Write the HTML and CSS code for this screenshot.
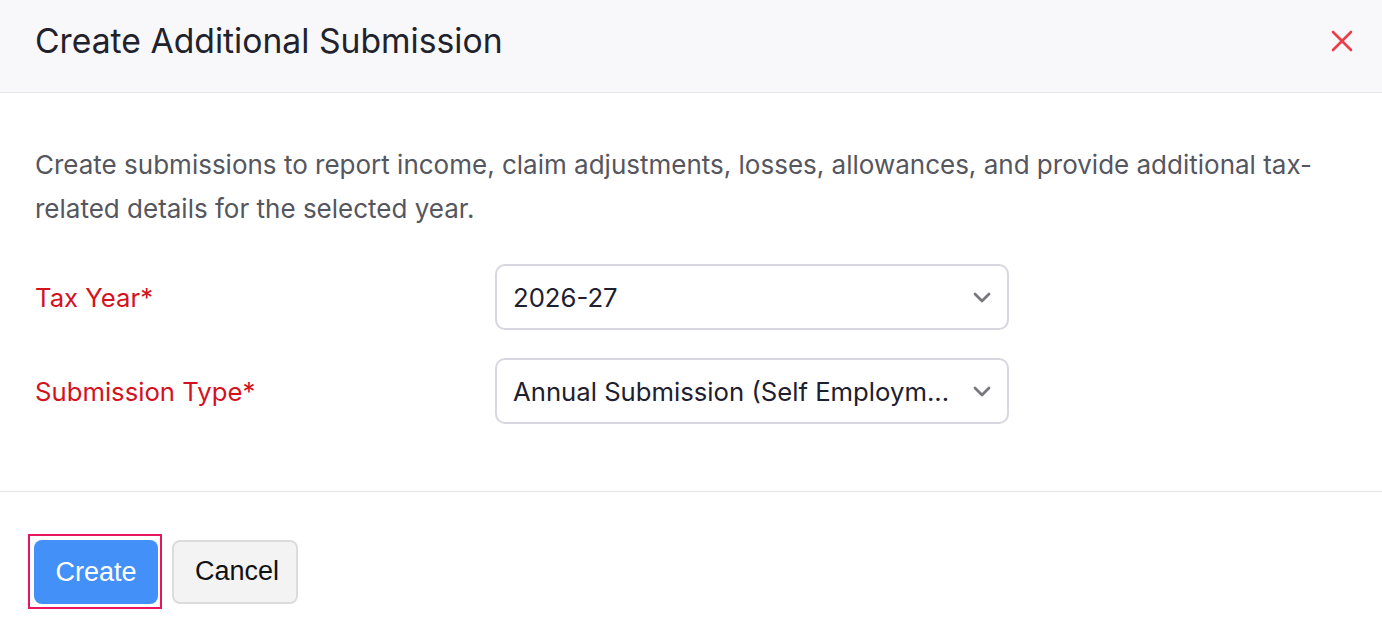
FILE: index.html
```html
<!DOCTYPE html>
<html lang="en">
<head>
  <meta charset="UTF-8" />
  <meta name="viewport" content="width=device-width, initial-scale=1" />
  <title>Create Additional Submission</title>
  <link rel="stylesheet" href="styles.css">
</head>
<body>
  <div class="modal">
    <div class="modal-header">
      <h2 class="modal-title">Create Additional Submission</h2>
      <button class="close-btn" aria-label="Close">
        <svg width="24" height="24" viewBox="0 0 24 24" fill="none" stroke="#ec3d49" stroke-width="2.6" stroke-linecap="round">
          <line x1="3" y1="3" x2="21" y2="21" />
          <line x1="21" y1="3" x2="3" y2="21" />
        </svg>
      </button>
    </div>

    <div class="modal-body">
      <p class="intro">Create submissions to report income, claim adjustments, losses, allowances, and provide additional tax-related details for the selected year.</p>

      <div class="form-row">
        <label class="form-label">Tax Year*</label>
        <div class="select-box">
          <span class="select-value">2026-27</span>
          <svg class="chevron" width="18" height="11" viewBox="0 0 18 11" fill="none" stroke="#77777d" stroke-width="2.8" stroke-linecap="round" stroke-linejoin="round">
            <polyline points="2,2 9,9 16,2" />
          </svg>
        </div>
      </div>

      <div class="form-row">
        <label class="form-label">Submission Type*</label>
        <div class="select-box">
          <span class="select-value" title="Annual Submission (Self Employment)">Annual Submission (Self Employm...</span>
          <svg class="chevron" width="18" height="11" viewBox="0 0 18 11" fill="none" stroke="#77777d" stroke-width="2.8" stroke-linecap="round" stroke-linejoin="round">
            <polyline points="2,2 9,9 16,2" />
          </svg>
        </div>
      </div>
    </div>

    <div class="modal-footer">
      <span class="focus-ring">
        <button class="btn btn-primary">Create</button>
      </span>
      <button class="btn btn-secondary">Cancel</button>
    </div>
  </div>
</body>
</html>
```

FILE: styles.css
```css
body {
  margin: 0;
  padding: 0;
  background: #fff;
  font-family: Inter, "Noto Sans", sans-serif;
}
.modal {
  width: 1382px;
  min-height: 632px;
  background: #fff;
}
.modal-header {
  box-sizing: border-box;
  display: flex;
  align-items: center;
  justify-content: space-between;
  height: 93px;
  padding: 0 28px 11px 35px;
  background: #f8f8fa;
  border-bottom: 1px solid #e6e6ea;
}
.modal-title {
  margin: 0;
  font-size: 33.7px;
  font-weight: 400;
  color: #21222c;
}
.close-btn {
  border: none;
  background: none;
  padding: 0;
  display: flex;
  cursor: pointer;
}
.modal-body {
  padding: 50px 35px 67px;
  border-bottom: 1px solid #e6e6ea;
}
.intro {
  margin: 0 0 33px;
  font-size: 26px;
  line-height: 44px;
  color: #55565e;
}
.form-row {
  display: flex;
  align-items: center;
  margin-bottom: 28px;
}
.form-row:last-child {
  margin-bottom: 0;
}
.form-label {
  width: 460px;
  font-size: 25.7px;
  color: #d4121e;
}
.select-box {
  box-sizing: border-box;
  width: 514px;
  height: 66px;
  display: flex;
  align-items: center;
  justify-content: space-between;
  padding: 0 16px 0 16px;
  border: 2px solid #d7d7e0;
  border-radius: 10px;
  background: #fff;
}
.select-value {
  font-size: 25.7px;
  color: #1e2030;
  white-space: nowrap;
  padding-right: 16px;
}
.chevron {
  flex: none;
}
.modal-footer {
  display: flex;
  align-items: center;
  gap: 10px;
  padding: 42px 28px;
}
.focus-ring {
  display: flex;
  padding: 4px 2px 3px 4px;
  border: 2px solid #e8175d;
}
.btn {
  height: 64px;
  padding: 0 21px;
  border-radius: 8px;
  font-family: "Liberation Sans", Arial, sans-serif;
  font-size: 27px;
  cursor: pointer;
}
.btn-primary {
  width: 124px;
  background: #4390f9;
  border: none;
  color: #fff;
}
.btn-secondary {
  width: 126px;
  background: #f3f3f3;
  border: 2px solid #dcdcdc;
  color: #111;
}
```
